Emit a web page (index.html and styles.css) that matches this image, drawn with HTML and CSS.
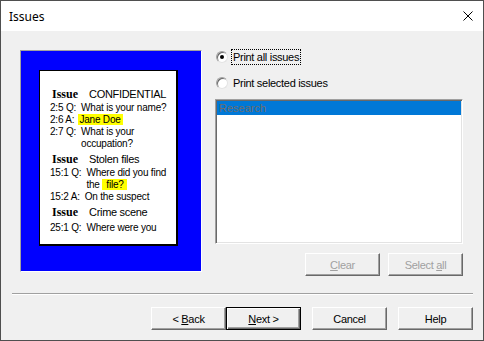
FILE: index.html
```html
<!DOCTYPE html>
<html lang="en">
<head>
    <meta charset="UTF-8">
    <meta name="viewport" content="width=device-width, initial-scale=1.0">
    <title>Issues</title>
    <link rel="stylesheet" href="styles.css">
</head>
<body>
    <div class="window">
        <div class="titlebar">
            <span class="title">Issues</span>
            <svg class="close-icon" width="10" height="10" viewBox="0 0 10 10">
                <path d="M0.5 0.5 L9.5 9.5 M9.5 0.5 L0.5 9.5" stroke="#000" stroke-width="1" fill="none"/>
            </svg>
        </div>

        <div class="main">
            <div class="preview">
                <div class="page">
                    <div class="issue">
                        <div class="issue-head"><span class="issue-label">Issue</span><span class="issue-title">CONFIDENTIAL</span></div>
                        <div class="entry"><span class="ref">2:5 Q:</span><span class="text">What is your name?</span></div>
                        <div class="entry"><span class="ref">2:6 A:</span><span class="text"><mark class="hl">Jane Doe</mark></span></div>
                        <div class="entry"><span class="ref">2:7 Q:</span><span class="text">What is your occupation?</span></div>
                    </div>
                    <div class="issue">
                        <div class="issue-head"><span class="issue-label">Issue</span><span class="issue-title">Stolen files</span></div>
                        <div class="entry"><span class="ref">15:1 Q:</span><span class="text">Where did you find the <mark class="hl hl-word">file?</mark></span></div>
                        <div class="entry"><span class="ref">15:2 A:</span><span class="text">On the suspect</span></div>
                    </div>
                    <div class="issue issue-last">
                        <div class="issue-head"><span class="issue-label">Issue</span><span class="issue-title">Crime scene</span></div>
                        <div class="entry"><span class="ref">25:1 Q:</span><span class="text">Where were you</span></div>
                    </div>
                </div>
            </div>

            <div class="side">
                <div class="radio-row">
                    <span class="radio checked"><span class="dot"></span></span>
                    <span class="radio-label focused">Print all issues</span>
                </div>
                <div class="radio-row">
                    <span class="radio"></span>
                    <span class="radio-label">Print selected issues</span>
                </div>
                <div class="listbox">
                    <div class="list-item selected">Research</div>
                </div>
                <div class="list-actions">
                    <button class="btn" disabled><u>C</u>lear</button>
                    <button class="btn" disabled>Select <u>a</u>ll</button>
                </div>
            </div>
        </div>

        <div class="separator"></div>

        <div class="footer">
            <div class="nav-pair">
                <button class="btn">&lt; <u>B</u>ack</button>
                <button class="btn btn-default"><u>N</u>ext &gt;</button>
            </div>
            <button class="btn">Cancel</button>
            <button class="btn">Help</button>
        </div>
    </div>
</body>
</html>
```

FILE: styles.css
```css
* {
    margin: 0;
    padding: 0;
    box-sizing: border-box;
}

body {
    background: #fff;
    font-family: 'Liberation Sans', Arial, sans-serif;
    font-size: 11px;
    color: #000;
}

.window {
    width: 484px;
    height: 341px;
    border: 1px solid #4f4f4f;
    background: #f0f0f0;
    display: flex;
    flex-direction: column;
}

.titlebar {
    height: 30px;
    background: #fff;
    display: flex;
    align-items: center;
    justify-content: space-between;
    padding: 0 10px 0 8px;
    font-family: 'Noto Sans', sans-serif;
    font-size: 12px;
}

.main {
    display: flex;
    gap: 13px;
    padding: 19px 20px 0 19px;
}

/* preview of the printed page */
.preview {
    width: 182px;
    height: 222px;
    background: #0000ff;
    border: 1px solid;
    border-color: #a0a0a0 #fff #fff #a0a0a0;
    padding: 19px 0 0 18px;
}

.page {
    width: 139px;
    height: 176px;
    background: #fff;
    border-style: solid;
    border-color: #000;
    border-width: 1px 2px 2px 1px;
    padding: 16px 3px 0 10px;
}

.issue + .issue {
    margin-top: 2px;
}

.issue-head {
    display: flex;
    align-items: baseline;
    height: 15px;
    line-height: 15px;
    padding-left: 2px;
}

.issue-last .entry {
    margin-top: 2px;
}

.issue-label {
    width: 37px;
    font-family: 'Liberation Serif', serif;
    font-weight: bold;
    font-size: 12px;
}

.issue-title {
    font-size: 11px;
    letter-spacing: -0.3px;
}

.entry {
    display: flex;
    gap: 5px;
    font-size: 10px;
    line-height: 12px;
    letter-spacing: -0.2px;
}

.ref {
    white-space: nowrap;
}

.hl {
    background: #ffff00;
    color: #000;
    margin-left: -1px;
    padding: 0 2px 0 1px;
}

.hl-word {
    margin-left: 0;
    padding: 0 3px 0 4px;
}

/* right column */
.side {
    width: 248px;
    display: flex;
    flex-direction: column;
}

.radio-row {
    display: flex;
    align-items: center;
    height: 14px;
    gap: 5px;
    padding-left: 1px;
    letter-spacing: -0.3px;
}

.radio-row + .radio-row {
    margin-top: 12px;
}

.radio {
    width: 12px;
    height: 12px;
    border-radius: 50%;
    background: #fff;
    border: 1px solid;
    border-color: #a0a0a0 #e3e3e3 #e3e3e3 #a0a0a0;
    box-shadow: inset 1px 1px #696969;
    display: flex;
    align-items: center;
    justify-content: center;
}

.dot {
    width: 4px;
    height: 4px;
    border-radius: 50%;
    background: #000;
}

.radio-label {
    line-height: 14px;
    padding: 0 1px;
    margin-left: -1px;
}

.focused {
    outline: 1px dotted #000;
}

.listbox {
    margin-top: 9px;
    height: 145px;
    background: #fff;
    border: 1px solid;
    border-color: #a0a0a0 #fff #fff #a0a0a0;
    box-shadow: inset 1px 1px #696969, inset -1px -1px #e3e3e3;
    padding: 1px;
}

.list-item {
    height: 14px;
    line-height: 14px;
    padding-left: 2px;
    color: #6d6d6d;
}

.list-item.selected {
    background: #0078d7;
}

.list-actions {
    display: flex;
    justify-content: flex-end;
    gap: 8px;
    margin-top: 9px;
}

/* buttons */
.btn {
    width: 75px;
    height: 23px;
    background: #f0f0f0;
    border: 1px solid;
    border-color: #fff #696969 #696969 #fff;
    box-shadow: inset -1px -1px #a0a0a0;
    font-family: inherit;
    font-size: 11px;
    letter-spacing: -0.3px;
    color: #000;
}

.btn:disabled {
    color: #a0a0a0;
}

.btn-default {
    border-color: #000;
    box-shadow: inset 1px 1px #fff, inset -1px -1px #696969, inset -2px -2px #a0a0a0;
}

.separator {
    margin: 17px 10px 0 11px;
    border-top: 1px solid #a0a0a0;
    border-bottom: 1px solid #fff;
}

.footer {
    display: flex;
    justify-content: flex-end;
    gap: 11px;
    margin-top: 12px;
    padding-right: 10px;
}

.nav-pair {
    display: flex;
}
```
